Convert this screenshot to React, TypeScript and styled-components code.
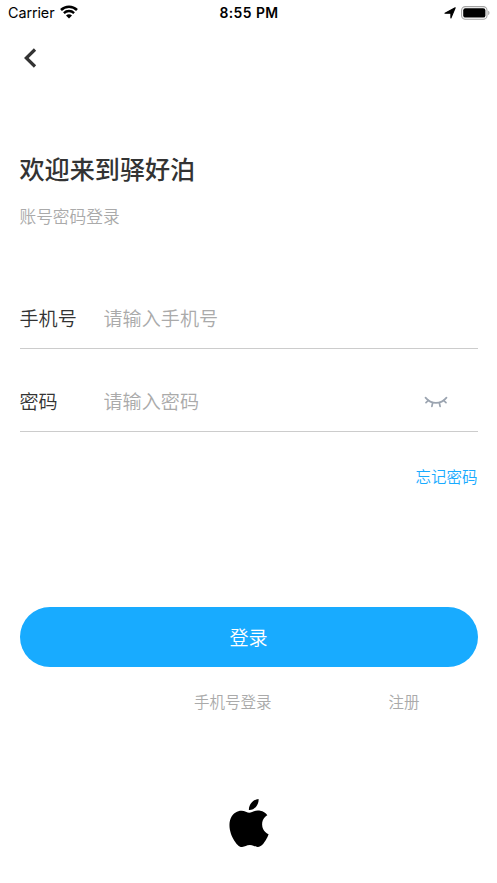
import React from "react";
import styled, { createGlobalStyle } from "styled-components";

const GlobalStyle = createGlobalStyle`
  * { box-sizing: border-box; }
  body {
    margin: 0;
    background: #fff;
    font-family: Inter, "Noto Sans CJK SC", sans-serif;
  }
`;

const Screen = styled.div`
  display: flex;
  flex-direction: column;
  width: 497px;
  height: 883px;
  background: #fff;
  overflow: hidden;
`;

const StatusBar = styled.div`
  display: grid;
  grid-template-columns: 1fr auto 1fr;
  align-items: center;
  height: 26px;
  padding: 0 7px 0 8px;
  color: #000;
`;

const Carrier = styled.div`
  display: flex;
  align-items: center;
  gap: 6px;
  font-size: 14.4px;
  line-height: 26px;
  letter-spacing: -0.1px;
  svg { display: block; margin-top: -2px; }
`;

const Clock = styled.div`
  font-size: 13.9px;
  font-weight: 600;
  line-height: 26px;
  letter-spacing: 0.45px;
`;

const Indicators = styled.div`
  display: flex;
  justify-content: flex-end;
  align-items: center;
  gap: 5px;
  height: 24px;
`;

const NavBar = styled.div`
  display: flex;
  align-items: center;
  height: 64px;
  padding-left: 22px;
`;

const BackButton = styled.button`
  display: flex;
  padding: 0;
  border: 0;
  background: none;
`;

const Content = styled.main`
  display: flex;
  flex-direction: column;
  padding: 59px 19.5px 0;
  font-family: "Noto Sans CJK SC", sans-serif;
  font-weight: 350;
`;

const Title = styled.h1`
  margin: 0;
  color: #333;
  font-size: 25.1px;
  font-weight: 500;
  line-height: 38px;
`;

const Subtitle = styled.p`
  margin: 17px 0 61px;
  color: #aaa;
  font-size: 16.7px;
  line-height: 24px;
`;

const Field = styled.label`
  display: flex;
  align-items: center;
  height: 60px;
  margin-bottom: 23px;
  padding: 0 30px 2px 0;
  border-bottom: 1px solid #ccc;
  svg { margin-top: 2px; }
`;

const FieldName = styled.span`
  width: 84px;
  color: #333;
  font-size: 19.1px;
  line-height: 28px;
`;

const Input = styled.input`
  flex: 1;
  min-width: 0;
  height: 28px;
  padding: 0;
  border: 0;
  outline: 0;
  background: none;
  color: #333;
  font: inherit;
  font-size: 19.1px;
  line-height: 28px;
  &::placeholder { color: #aaa; opacity: 1; }
`;

const TextLink = styled.a<{ $color: string }>`
  color: ${(p) => p.$color};
  font-size: 15.5px;
  line-height: 24px;
  white-space: nowrap;
`;

const ForgotRow = styled.div`
  display: flex;
  justify-content: flex-end;
  margin-top: 9px;
`;

const LoginButton = styled.button`
  height: 60px;
  margin-top: 119px;
  padding: 0;
  border: 0;
  border-radius: 30px;
  background: #18abff;
  color: #fff;
  font: inherit;
  font-size: 19.1px;
  line-height: 60px;
`;

const LinkRow = styled.nav`
  display: flex;
  gap: 117px;
  margin-top: 22px;
  padding-left: 174.5px;
`;

const AppleRow = styled.div`
  display: flex;
  justify-content: center;
  margin-top: 86px;
`;

const Wifi = () => (
  <svg width="18" height="14" viewBox="0 0 18 14">
    <path d="M1 5a11.4 11.4 0 0 1 16 0" fill="none" stroke="#000" strokeWidth="2.5" />
    <path d="M3.9 8.1a7.3 7.3 0 0 1 10.2 0" fill="none" stroke="#000" strokeWidth="2.3" />
    <path d="M9 13.6 6 10.6a4.3 4.3 0 0 1 6 0z" fill="#000" />
  </svg>
);

const LocationArrow = () => (
  <svg width="12" height="12" viewBox="0 0 12 12">
    <path d="M11.2.8 6.9 11V6.2H1z" fill="#000" stroke="#000" strokeWidth="1.1" strokeLinejoin="round" />
  </svg>
);

const Battery = () => (
  <svg width="29" height="14" viewBox="0 0 29 14">
    <rect x=".6" y=".6" width="25.4" height="12.6" rx="3.8" fill="none" stroke="#a3a3a3" strokeWidth="1.1" />
    <rect x="2.2" y="2.2" width="22.2" height="9.4" rx="2.2" fill="#000" />
    <path d="M27.2 4.8c1.7.5 1.7 3.7 0 4.2z" fill="#a3a3a3" />
  </svg>
);

const BackChevron = () => (
  <svg width="16" height="20" viewBox="0 0 16 20">
    <path d="m13 1.5-8.7 8.5 8.7 8.5" fill="none" stroke="#333" strokeWidth="3.2" />
  </svg>
);

const ClosedEye = () => (
  <svg width="24" height="12" viewBox="0 0 24 12" fill="none" stroke="#9ba4b0" strokeWidth="1.7" strokeLinecap="round">
    <path d="M1.5 1.6C7.2 8.6 16.8 8.6 22.5 1.6" />
    <path d="M4.3 4.5 2 6.7M8.7 6.6 7.9 10.4M15.3 6.6l.8 3.8M19.7 4.5 22 6.7" />
  </svg>
);

const AppleLogo = () => (
  <svg width="48" height="48" viewBox="0 0 24 24">
    <path d="M12.152 6.896c-.948 0-2.415-1.078-3.96-1.04-2.04.027-3.91 1.183-4.961 3.014-2.117 3.675-.546 9.103 1.519 12.09 1.013 1.454 2.208 3.09 3.792 3.039 1.52-.065 2.09-.987 3.935-.987 1.831 0 2.35.987 3.96.948 1.637-.026 2.676-1.48 3.676-2.948 1.156-1.688 1.636-3.325 1.662-3.415-.039-.013-3.182-1.221-3.22-4.857-.026-3.04 2.48-4.494 2.597-4.559-1.429-2.09-3.623-2.324-4.39-2.376-2-.156-3.675 1.09-4.61 1.09zM15.53 3.83c.843-1.012 1.4-2.427 1.245-3.83-1.207.052-2.662.805-3.532 1.818-.78.896-1.454 2.338-1.273 3.714 1.338.104 2.715-.688 3.559-1.701" />
  </svg>
);

export default function App() {
  return (
    <Screen>
      <GlobalStyle />
      <StatusBar>
        <Carrier>
          Carrier
          <Wifi />
        </Carrier>
        <Clock>8:55 PM</Clock>
        <Indicators>
          <LocationArrow />
          <Battery />
        </Indicators>
      </StatusBar>
      <NavBar>
        <BackButton aria-label="返回">
          <BackChevron />
        </BackButton>
      </NavBar>
      <Content>
        <Title>欢迎来到驿好泊</Title>
        <Subtitle>账号密码登录</Subtitle>
        <Field>
          <FieldName>手机号</FieldName>
          <Input type="tel" placeholder="请输入手机号" />
        </Field>
        <Field>
          <FieldName>密码</FieldName>
          <Input type="password" placeholder="请输入密码" />
          <ClosedEye />
        </Field>
        <ForgotRow>
          <TextLink $color="#18abff">忘记密码</TextLink>
        </ForgotRow>
        <LoginButton>登录</LoginButton>
        <LinkRow>
          <TextLink $color="#aaa">手机号登录</TextLink>
          <TextLink $color="#aaa">注册</TextLink>
        </LinkRow>
        <AppleRow>
          <AppleLogo />
        </AppleRow>
      </Content>
    </Screen>
  );
}
